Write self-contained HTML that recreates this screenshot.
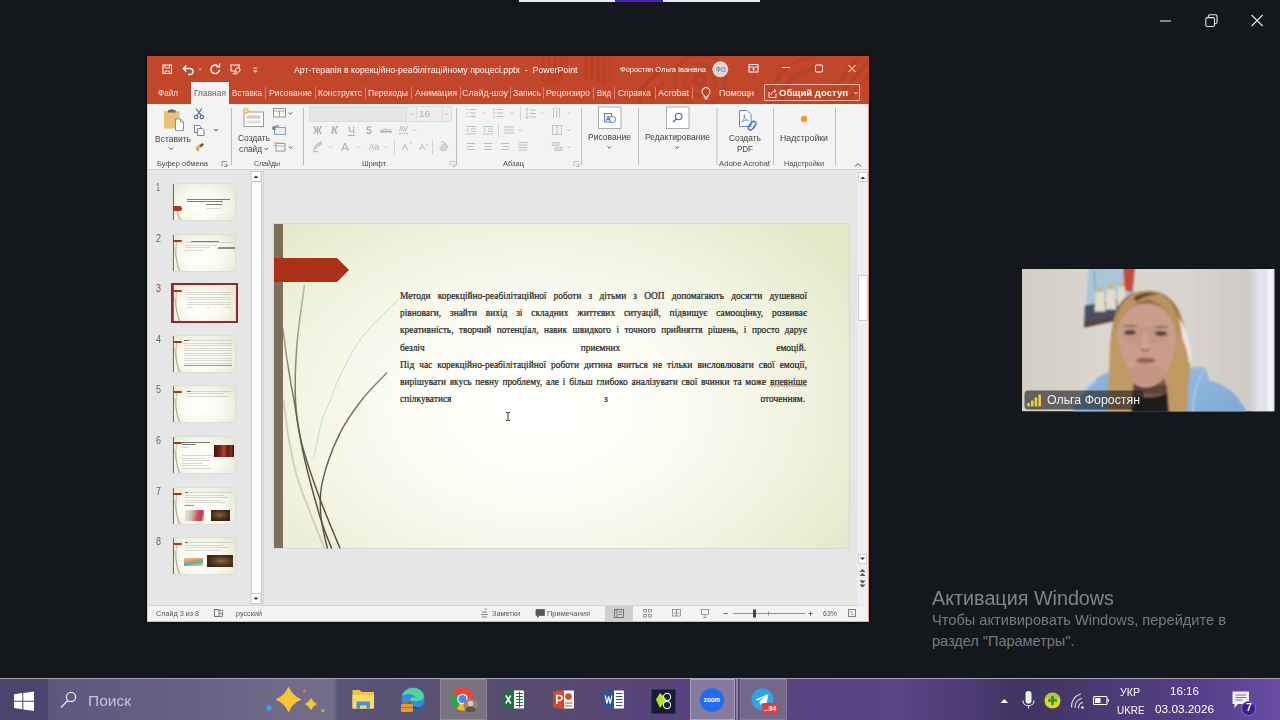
<!DOCTYPE html>
<html lang="ru">
<head>
<meta charset="utf-8">
<title>Zoom</title>
<style>
*{box-sizing:border-box;margin:0;padding:0}
html,body{width:1280px;height:720px;overflow:hidden;background:#14171b;font-family:"Liberation Sans",sans-serif;}
#root{position:relative;width:1280px;height:720px;overflow:hidden;background:#14171b}
#root>div,#root>svg,.a{position:absolute}
.t{position:absolute;white-space:nowrap;line-height:1.15;transform-origin:0 50%;display:block}
svg{overflow:visible}
</style>
</head>
<body>
<div id="root">
<!-- zoom window chrome -->
<div style="left:519px;top:0;width:241px;height:1.600px;background:#e8e8ee"></div>
<div style="left:615px;top:0;width:48px;height:1.600px;background:#4a22b0"></div>
<svg style="left:0;top:0" width="1280" height="50" viewBox="0 0 1280 50" fill="none" stroke="#e6e6e6" stroke-width="1.1">
  <path d="M1160 21h11"/>
  <rect x="1205.800" y="17.600" width="8.700" height="8.900" rx="1.600"/>
  <path d="M1208.300 17.600v-1.200a1.600 1.600 0 0 1 1.600-1.600h5.500a1.600 1.600 0 0 1 1.600 1.600v5.700a1.600 1.600 0 0 1-1.600 1.600h-.9"/>
  <path d="M1251.600 15l11 11M1262.600 15l-11 11"/>
</svg>

<!-- powerpoint window frame -->
<div style="left:145px;top:55px;width:726px;height:568.500px;background:#0d0e10;opacity:.6"></div>
<div style="left:147px;top:56px;width:722.300px;height:565.700px;background:#e6e6e6"></div>
<div style="left:147px;top:56px;width:722.300px;height:48px;background:#c1462a"></div>
<!-- title bar decorative pattern (right part) -->
<svg style="left:147px;top:56px" width="722" height="48" viewBox="147 56 722 48">
  <defs><clipPath id="tbc"><rect x="147" y="56" width="722" height="48"/></clipPath></defs>
  <g clip-path="url(#tbc)" fill="none" stroke="#b23e23" opacity=".55">
    <path stroke-width="3" d="M586 57v22M592 57v22M598 57v26M604 57v26M610 57v22"/>
    <circle cx="700" cy="80" r="5" stroke-width="5"/>
    <circle cx="700" cy="80" r="15" stroke-width="4"/>
    <circle cx="700" cy="80" r="26" stroke-width="4"/>
    <path stroke-width="4" d="M640 104v-14l20-20M652 104v-10l12-12"/>
    <path stroke-width="4" d="M770 104c0-26 20-47 46-47M782 104c0-20 14-35 34-35"/>
    <path stroke-width="4" d="M820 104l40-47M832 104l40-47M844 104l40-47"/>
    <path stroke-width="3" d="M543 56v26M549 56v28M555 56v28M561 56v26M567 56v20"/>
  </g>
</svg>
<!-- active tab -->
<div style="left:191px;top:82px;width:38px;height:22px;background:#f3f3f3"></div>
<!-- ribbon -->
<div style="left:148px;top:104px;width:720px;height:65px;background:#f3f3f3"></div>
<div style="left:148px;top:169px;width:720px;height:1px;background:#d2d2d2"></div>
<!-- window border -->
<div style="left:147px;top:104px;width:1px;height:517.700px;background:#e4c6bf"></div>
<div style="left:868.300px;top:104px;width:1px;height:517.700px;background:#dd9c8c"></div>
<div style="left:147px;top:620.700px;width:722.300px;height:1px;background:#e3b9ae"></div>
<!-- share button outline -->
<div style="left:764px;top:84px;width:96px;height:17px;border:1px solid #e9b9ab;border-radius:1px"></div>
<!-- tab separators -->
<svg style="left:0;top:0" width="1280" height="720" viewBox="0 0 1280 720">
 <g stroke="#d77f69" stroke-width="1">
  <path d="M265.5 87v12M315.5 87v12M365.5 87v12M411.5 87v12M460.5 87v12M510.5 87v12M543.5 87v12M593.5 87v12M614.5 87v12M655.5 87v12M692.5 87v12"/>
 </g>
 <!-- ribbon group dividers -->
 <g stroke="#bdbdbd" stroke-width="1">
  <path d="M231.5 108v57M303.5 108v57M456.5 108v57M581.5 108v57M638.5 108v57M717 108v57M773.5 108v57M835.5 108v57"/>
 </g>
 <g stroke="#d2d2d2" stroke-width="1"><path d="M394.5 140v14M432.5 140v14M520.5 107v13M498.5 124v13"/></g>
</svg>
<!-- left pane scrollbar -->
<div style="left:250.500px;top:171px;width:11px;height:433px;background:#ffffff;border:1px solid #cbcbcb"></div>
<div style="left:263px;top:170px;width:1px;height:435px;background:#d4d4d4"></div>
<!-- right scrollbar -->
<div style="left:857px;top:170px;width:11.300px;height:435px;background:#efefef"></div>
<div style="left:858px;top:275px;width:9.500px;height:46px;background:#ffffff;border:1px solid #cfcfcf"></div>
<div style="left:858px;top:172px;width:9.500px;height:10px;background:#fff;border:1px solid #cfcfcf"></div>
<div style="left:858px;top:554px;width:9px;height:10px;background:#fff;border:1px solid #cfcfcf"></div>
<!-- status bar -->
<div style="left:148px;top:606px;width:720.300px;height:15px;background:#f3f3f3"></div>
<div style="left:148px;top:604.500px;width:709px;height:1.500px;background:#d6d6d6"></div>
<div style="left:605px;top:606px;width:28px;height:15px;background:#cfcfcf"></div>

<!-- ribbon + titlebar icons -->
<svg style="left:0;top:0" width="1280" height="720" viewBox="0 0 1280 720" fill="none">
 <!-- QAT (white) -->
 <g stroke="#fff" stroke-width="1.1" fill="none">
  <path d="M163 65h8.5v8.5h-8.5z"/><path d="M165 65v3h4.5v-3M165.3 73.5v-2.5h4v2.5" stroke-width=".9"/>
  <path d="M183.5 68.5h6.5a3 3 0 0 1 0 6h-2" stroke-width="1.3"/><path d="M186.3 65.5l-3 3 3 3" stroke-width="1.3"/>
  <path d="M198.5 68.5l1.5 1.5 1.5-1.5" stroke-width=".9" opacity=".8"/>
  <path d="M218.6 66.6a4.3 4.3 0 1 0 .9 3.2" stroke-width="1.4"/><path d="M219.6 63.4v3.6h-3.6" stroke-width="1.2"/>
  <path d="M230 65h10M231 65v6h8v-6M235 71v2.5M232.5 73.8h5" stroke-width="1"/><circle cx="237.8" cy="70" r="2.3" fill="#c1462a" stroke-width=".9"/>
  <path d="M253.5 68h3.5" stroke-width=".9"/><path d="M253.5 70.5l1.8 1.8 1.8-1.8" stroke-width=".9" fill="#fff"/>
  <!-- ribbon display options, min, max, close -->
  <rect x="749" y="64.5" width="9" height="7.5" stroke-width="1"/><path d="M749 67h9M753.5 71.2v-3M752 69.5l1.500-1.500 1.500 1.500" stroke-width=".9"/>
  <path d="M782 67.5h8" stroke-width="1"/>
  <rect x="815.5" y="65" width="7" height="7" rx="1" stroke-width="1"/>
  <path d="M848.5 65l7 7M855.5 65l-7 7" stroke-width="1"/>
  <!-- bulb -->
  <path d="M704.2 95.3c-1.6-1.2-2.2-2.4-2.2-3.8a4 4 0 0 1 8 0c0 1.400-.6 2.600-2.200 3.800v1.700h-3.600z" stroke-width="1"/><path d="M704.5 98.800h3" stroke-width="1"/>
  <!-- share icon + arrow -->
  <path d="M769 92v5.500h7v-4" stroke-width=".9"/><path d="M771 95c.3-2.500 2-4 4.500-4.200M774 89l2 1.800-2 1.800" stroke-width=".9"/>
  <path d="M854 92l1.800 1.800 1.800-1.800" stroke-width=".9"/>
 </g>
 <circle cx="720.3" cy="69.3" r="8" fill="#ded6da"/>

 <!-- Paste -->
 <rect x="164" y="111" width="15.500" height="17.500" rx="1" fill="#eac07a"/>
 <path d="M168 112.500v-2.500h2.300a1.600 1.600 0 0 1 3 0h2.300v2.500z" fill="#6a6a6a"/>
 <path d="M175.500 119h5l3 3v8.500h-8z" fill="#fff" stroke="#7a7a7a" stroke-width=".8"/>
 <path d="M180.500 119v3h3" stroke="#7a7a7a" stroke-width=".7"/>
 <path d="M169 147.500l2 2 2-2" stroke="#555" stroke-width="1"/>
 <!-- scissors -->
 <g stroke="#44618c" stroke-width="1.100"><path d="M196 108.500l5.200 7M202 108.500l-5.200 7"/><circle cx="196.200" cy="117" r="1.700"/><circle cx="201.800" cy="117" r="1.700"/></g>
 <!-- copy -->
 <g stroke="#777" stroke-width=".9" fill="#fafafa"><path d="M194.500 125.500h5l1.500 1.500v5.500h-6.500z"/><path d="M197.500 128.500h5l1.500 1.500v5.500h-6.500z"/></g>
 <path d="M214 129l2 2 2-2" stroke="#555" stroke-width="1"/>
 <!-- format painter -->
 <path d="M195.500 147l4.500-3 2 3-4.500 3z" fill="#e8b25c"/><path d="M199.500 145.500l3-2.500 1.300 1.800-3 2.500z" fill="#5a5040"/><path d="M196 148.500l3 2.500" stroke="#c9923a" stroke-width="1.500"/>
 <!-- dialog launchers -->
 <g stroke="#777" stroke-width=".8"><path d="M222 161.500h-0v5M222 161.500h5M224 166.500h3v-3M227 166.500l-2.500-2.500"/>
  <g opacity=".45"><path d="M450 161.500v5M450 161.500h5M452 166.500h3v-3M455 166.500l-2.500-2.500"/><path d="M574 161.500v5M574 161.500h5M576 166.500h3v-3M579 166.500l-2.500-2.500"/></g></g>

 <!-- New slide -->
 <rect x="244" y="112" width="19.500" height="14.500" fill="#fdfdfd" stroke="#9a9a9a" stroke-width="1"/>
 <rect x="247" y="115.500" width="13.500" height="3" fill="#c9c9c9"/><rect x="247" y="120.500" width="13.500" height="3" fill="#dedede"/>
 <g stroke="#efb04a" stroke-width="1.100"><path d="M246 107.500v7M242.500 111h7M243.600 108.600l4.800 4.800M248.400 108.600l-4.800 4.800"/></g><circle cx="246" cy="111" r="1.600" fill="#fbe2a8"/>
 <path d="M264.500 148l1.800 1.800 1.800-1.800" stroke="#555" stroke-width="1"/>
 <!-- layout / reset / section -->
 <rect x="273.500" y="108.500" width="12" height="8.500" fill="#fafafa" stroke="#8a8a8a" stroke-width=".9"/><path d="M273.500 111h12M279.500 111v6" stroke="#8a8a8a" stroke-width=".8"/>
 <path d="M288.700 112.500l1.800 1.800 1.800-1.800" stroke="#555" stroke-width="1"/>
 <rect x="274.500" y="127.500" width="11" height="7" fill="#e7eef7" stroke="#7d99bd" stroke-width=".9"/><path d="M273.500 129c.5-2.500 3-3.800 5.500-3M273 126.500v2.800h2.800" stroke="#3f74b5" stroke-width="1.100"/>
 <rect x="276" y="143.500" width="9" height="7.500" fill="#fafafa" stroke="#8a8a8a" stroke-width=".9"/><path d="M273.500 143h8M273.500 145.500h2" stroke="#e2a44a" stroke-width="1.100"/><path d="M276 146h9" stroke="#8a8a8a" stroke-width=".7"/>
 <path d="M288.700 146.500l1.800 1.800 1.800-1.800" stroke="#555" stroke-width="1"/>

 <!-- font boxes -->
 <rect x="309.500" y="106.500" width="97" height="15" fill="#e6e6e6" stroke="#dcdcdc"/>
 <rect x="406.500" y="106.500" width="10" height="15" fill="#ededed" stroke="#dcdcdc"/>
 <rect x="416.500" y="106.500" width="26" height="15" fill="#ededed" stroke="#dcdcdc"/>
 <rect x="442.500" y="106.500" width="9" height="15" fill="#ededed" stroke="#dcdcdc"/>
 <g stroke="#bdbdbd" stroke-width=".9">
  <path d="M410 113.500l1.500 1.500 1.500-1.500M445.500 113.500l1.500 1.500 1.500-1.500"/>
  <path d="M413 129.500l1.500 1.500 1.500-1.500M329 146.500l1.500 1.500 1.500-1.500M357 146.500l1.500 1.500 1.500-1.500M384 146.500l1.500 1.500 1.500-1.500"/>
  <path d="M399 133.500h9M399 133.500l1.300-1.200M399 133.500l1.300 1.200M408 133.500l-1.300-1.200M408 133.500l-1.300 1.200" stroke-width=".7"/>
  <!-- highlighter -->
  <path d="M313.500 150l2-4.500 5-4 1.500 1.800-5 4z" fill="#d0d0d0"/><path d="M313 151.500h5" stroke-width="1.400"/>
  <path d="M409.500 143.500l1.300-1.500 1.300 1.500M426 144.500l1.200 1.300 1.200-1.300" stroke-width=".8"/>
  <!-- eraser -->
  <path d="M441.500 150.500l-1.800-2.600 5-5 3.500 3.500-3 4.100z" fill="#d6d6d6"/><path d="M441 143l2-2 1.500 2" fill="none"/>
 </g>
 <!-- paragraph icons -->
 <g stroke="#bdbdbd" stroke-width="1">
  <path d="M469.500 109.500h6M469.500 113h6M469.500 116.500h6M466 109.500h1.500M466 113h1.500M466 116.500h1.500"/>
  <path d="M482.500 112.500l1.500 1.500 1.500-1.500M510.500 112.500l1.500 1.500 1.500-1.500M541 112.500l1.500 1.500 1.500-1.500M567.500 112.500l1.500 1.500 1.500-1.500M519 129.500l1.500 1.500 1.500-1.500M567.500 129.500l1.500 1.500 1.500-1.500M567.500 146.500l1.500 1.500 1.500-1.500" stroke-width=".9"/>
  <path d="M497 109.500h6M497 113h6M497 116.500h6M494 108.500v2.500M494 112v2.500M494 115.500v2.500"/>
  <path d="M530 110h6M530 113.500h6M530 117h6" /><path d="M527 108v10.500M525.500 109.500l1.500-1.500 1.500 1.500M525.500 117l1.500 1.500 1.500-1.500" stroke-width=".8"/>
  <path d="M553.500 108v10M556.500 110v8M559.500 108v10M555 109l1.500-1.500 1.500 1.500" stroke-width=".9"/>
  <path d="M466 126.500h10M471 129h5M471 131.500h5M466 134h10M469 128.500l-2.500 1.800 2.500 1.800" stroke-width=".9"/>
  <path d="M483 126.500h10M488 129h5M488 131.500h5M483 134h10M483.500 128.500l2.500 1.800-2.500 1.800" stroke-width=".9"/>
  <path d="M504 127h10M504 130h10M504 133h10"/>
  <rect x="552.500" y="125.500" width="9" height="9" stroke-width=".9" fill="none"/><path d="M557 126.500v7M555.500 128l1.500-1.500 1.500 1.500M555.500 132l1.500 1.500 1.500-1.500" stroke-width=".8"/>
  <path d="M467 143.500h8M467 146.500h6M467 149.500h8"/>
  <path d="M484 143.500h8M485 146.500h6M484 149.500h8"/>
  <path d="M501 143.500h8M503 146.500h6M501 149.500h8"/>
  <path d="M518.500 142.500h9M518.500 145h9M518.500 147.500h9M518.500 150h9"/>
  <path d="M552 142.500h7v3h-7zM555 147.500h7v3h-7z" fill="#e3e3e3" stroke-width=".8"/>
 </g>
 <!-- Drawing button -->
 <rect x="598.500" y="107" width="22.500" height="21.500" fill="#fff" stroke="#adadad"/>
 <rect x="604.500" y="113.500" width="7" height="8.500" fill="#fff" stroke="#4a76b0" stroke-width=".9"/><circle cx="612.500" cy="119.500" r="3.200" fill="#fff" stroke="#4a76b0" stroke-width=".9"/>
 <text x="605.600" y="121" font-family="Liberation Sans, sans-serif" font-size="7" fill="#4a76b0" font-weight="700">A</text>
 <path d="M607.500 146.500l1.800 1.800 1.800-1.800" stroke="#555" stroke-width="1"/>
 <!-- Editing button -->
 <rect x="666.500" y="107" width="22.500" height="21.500" fill="#fff" stroke="#adadad"/>
 <circle cx="678.700" cy="116.500" r="3.200" stroke="#3c6aa6" stroke-width="1.100"/><path d="M676.400 118.800l-3.400 3.400" stroke="#3c6aa6" stroke-width="1.300"/>
 <path d="M675.500 146.500l1.800 1.800 1.800-1.800" stroke="#555" stroke-width="1"/>
 <!-- Create PDF -->
 <path d="M739.500 110.500h7.500l4 4v12h-11.500z" fill="#fdfdfd" stroke="#5f86c4" stroke-width="1"/>
 <path d="M742 122c1.800-2.400 3-5.400 2.600-7.400-1.100.400-.6 3.200 1.200 5 1.200 1.100 2.800 1.400 2.900.7 0-.8-3.600-.7-6.700 1.700z" stroke="#5f86c4" stroke-width=".8"/>
 <g stroke="#4a78c0" stroke-width="1.400" stroke-linecap="round"><path d="M749.500 124.500l2.600-2.600a2.300 2.300 0 0 1 3.300 3.300l-1.600 1.600"/><path d="M753.200 125.200l-2.600 2.600a2.300 2.300 0 0 1-3.300-3.300l1.600-1.600" transform="translate(1.500 1.500)"/></g>
 <!-- Add-ins dot -->
 <circle cx="804" cy="119" r="3.200" fill="#f29a2e"/>
 <!-- collapse chevron -->
 <path d="M855 166.500l3-3 3 3" stroke="#555" stroke-width="1"/>
</svg>

<!-- thumbnails -->
<style>.th{position:absolute;left:173px;width:62px;height:36px;background:radial-gradient(ellipse 65% 80% at 46% 58%,#ffffff 0%,#fbfbf3 45%,#eff0e0 80%,#e5e8d2 100%);box-shadow:0 0 0 .5px #d5d5cc}.th i{position:absolute;display:block}.th .b{left:0;top:0;width:1.2px;height:36px;background:#7a6e5a}.th .r{left:0;top:5px;width:8.5px;height:2.600px;background:#b5351c;border-radius:0 1.5px 1.5px 0}.th .l{height:1px;background:#a5a59a;opacity:.4}.th .d{height:1px;background:#4a473f;opacity:.7}</style>
<div class="th" style="top:183.5px"><i class="b"></i><svg style="position:absolute;left:0;top:0" width="62" height="36" viewBox="0 0 62 36" fill="none"><path d="M3.500 26C4 30 5.500 33.500 7 36M5 27C5.500 31 7 34 8.500 36" stroke="#8a826c" stroke-width=".6" opacity=".7"/></svg><i class="r" style="top:22.5px;height:4.5px;width:9px;border-radius:0 2.5px 2.5px 0"></i><i class="d" style="left:14px;top:15.5px;width:43px"></i><i class="d" style="left:14px;top:17.5px;width:36px"></i><i class="d" style="left:33px;top:20.5px;width:16px"></i><i class="l" style="left:33px;top:24.5px;width:15px"></i></div>
<div class="th" style="top:234.5px"><i class="b"></i><svg style="position:absolute;left:0;top:0" width="63" height="36" viewBox="0 0 63 36" fill="none"><path d="M1.5 12C2.5 22 4.5 30 7 36M3.5 7C2.4 18 3 27 6 36" stroke="#8a826c" stroke-width=".6" opacity=".8"/></svg><i class="r"></i><i class="l" style="left:12px;top:7px;width:48px"></i><i class="d" style="left:18px;top:6.5px;width:28px;height:1.300px"></i><i class="l" style="left:12px;top:10px;width:32px"></i><i class="l" style="left:12px;top:12.5px;width:25px"></i><i class="d" style="left:45px;top:12.5px;width:17px;height:1.5px;opacity:.6"></i><i class="l" style="left:12px;top:15.5px;width:18px"></i></div>
<div class="th" style="top:284.5px"><i class="b"></i><svg style="position:absolute;left:0;top:0" width="63" height="36" viewBox="0 0 63 36" fill="none"><path d="M1.5 12C2.5 22 4.5 30 7 36M3.5 7C2.4 18 3 27 6 36" stroke="#8a826c" stroke-width=".6" opacity=".8"/></svg><i class="r"></i><i class="l" style="left:14px;top:7px;width:44px"></i><i class="l" style="left:14px;top:9.5px;width:44px"></i><i class="l" style="left:14px;top:12px;width:44px"></i><i class="l" style="left:14px;top:14.5px;width:44px"></i><i class="l" style="left:14px;top:17px;width:44px"></i><i class="l" style="left:14px;top:19.5px;width:44px"></i><i class="l" style="left:14px;top:22px;width:6px"></i><i class="l" style="left:34px;top:22px;width:3px"></i><i class="l" style="left:52px;top:22px;width:6px"></i></div>
<div class="th" style="top:335.5px"><i class="b"></i><svg style="position:absolute;left:0;top:0" width="63" height="36" viewBox="0 0 63 36" fill="none"><path d="M1.5 12C2.5 22 4.5 30 7 36M3.5 7C2.4 18 3 27 6 36" stroke="#8a826c" stroke-width=".6" opacity=".8"/></svg><i class="r"></i><i class="l" style="left:11px;top:4.5px;width:48px"></i><i class="l" style="left:11px;top:7px;width:48px"></i><i class="l" style="left:11px;top:9.5px;width:48px"></i><i class="l" style="left:11px;top:12px;width:48px"></i><i class="l" style="left:11px;top:14.5px;width:48px"></i><i class="l" style="left:11px;top:17px;width:48px"></i><i class="l" style="left:11px;top:19.5px;width:48px"></i><i class="l" style="left:11px;top:22px;width:48px"></i><i class="l" style="left:11px;top:24.5px;width:48px"></i><i class="l" style="left:11px;top:27px;width:48px"></i><i class="l" style="left:11px;top:29.5px;width:48px"></i><i class="d" style="left:11px;top:4.5px;width:5px"></i><i class="d" style="left:11px;top:29.5px;width:48px;opacity:.45"></i></div>
<div class="th" style="top:385.5px"><i class="b"></i><svg style="position:absolute;left:0;top:0" width="63" height="36" viewBox="0 0 63 36" fill="none"><path d="M1.5 12C2.5 22 4.5 30 7 36M3.5 7C2.4 18 3 27 6 36" stroke="#8a826c" stroke-width=".6" opacity=".8"/></svg><i class="r"></i><i class="l" style="left:14px;top:5px;width:44px"></i><i class="l" style="left:14px;top:7.5px;width:37px"></i><i class="l" style="left:14px;top:10px;width:41px"></i><i class="d" style="left:14px;top:5px;width:4px"></i></div>
<div class="th" style="top:436.5px"><i class="b"></i><svg style="position:absolute;left:0;top:0" width="63" height="36" viewBox="0 0 63 36" fill="none"><path d="M1.5 12C2.5 22 4.5 30 7 36M3.5 7C2.4 18 3 27 6 36" stroke="#8a826c" stroke-width=".6" opacity=".8"/></svg><i class="r"></i><i class="d" style="left:9px;top:5px;width:28px"></i><i class="d" style="left:9px;top:7.5px;width:14px"></i><i class="l" style="left:9px;top:10.5px;width:7px"></i><i class="l" style="left:9px;top:18.5px;width:31px"></i><i class="l" style="left:9px;top:21px;width:24px"></i><i class="l" style="left:9px;top:23.5px;width:28px"></i><i class="l" style="left:9px;top:26px;width:21px"></i><i class="l" style="left:9px;top:28.5px;width:25px"></i><i class="l" style="left:9px;top:31px;width:29px"></i><i style="left:41px;top:8px;width:19.5px;height:12.5px;background:linear-gradient(90deg,#3c1410 0%,#7a2418 30%,#b0452a 50%,#5a1a14 70%,#8a3020 85%,#35100e 100%)"></i></div>
<div class="th" style="top:487.5px"><i class="b"></i><svg style="position:absolute;left:0;top:0" width="63" height="36" viewBox="0 0 63 36" fill="none"><path d="M1.5 12C2.5 22 4.5 30 7 36M3.5 7C2.4 18 3 27 6 36" stroke="#8a826c" stroke-width=".6" opacity=".8"/></svg><i class="r"></i><i class="l" style="left:12px;top:4.5px;width:46px"></i><i class="l" style="left:12px;top:7px;width:39px"></i><i class="l" style="left:12px;top:9.5px;width:43px"></i><i class="l" style="left:12px;top:12px;width:36px"></i><i class="l" style="left:12px;top:14.5px;width:40px"></i><i class="d" style="left:12px;top:4.5px;width:3px"></i><i class="d" style="left:12px;top:17.5px;width:9px;opacity:.6"></i><i style="left:11.5px;top:22.5px;width:19px;height:11px;background:linear-gradient(100deg,#e9e4de 0%,#d8cfc6 25%,#c9a48c 45%,#d04860 65%,#c83850 85%,#e8e0d8 100%)"></i><i style="left:37.5px;top:22px;width:19.5px;height:11px;background:radial-gradient(ellipse at 45% 45%,#8a6038 0%,#4a2c18 55%,#24140c 100%)"></i></div>
<div class="th" style="top:537.5px"><i class="b"></i><svg style="position:absolute;left:0;top:0" width="63" height="36" viewBox="0 0 63 36" fill="none"><path d="M1.5 12C2.5 22 4.5 30 7 36M3.5 7C2.4 18 3 27 6 36" stroke="#8a826c" stroke-width=".6" opacity=".8"/></svg><i class="r"></i><i class="l" style="left:12px;top:4.5px;width:46px"></i><i class="l" style="left:12px;top:7px;width:39px"></i><i class="l" style="left:12px;top:9.5px;width:43px"></i><i class="l" style="left:12px;top:12.5px;width:36px"></i><i class="d" style="left:12px;top:4.5px;width:3px"></i><i style="left:11px;top:20px;width:18.5px;height:8.5px;background:linear-gradient(170deg,#e8c9a0 0%,#e39a60 35%,#58b0a8 60%,#e0d4b0 100%)"></i><i style="left:34px;top:17px;width:26px;height:12px;background:radial-gradient(ellipse at 55% 50%,#8a6a3c 0%,#50341c 50%,#2a1a10 100%)"></i></div>
<div style="left:171px;top:283px;width:67px;height:39.500px;border:2px solid #8e2b2b"></div>

<!-- slide -->
<div style="left:273px;top:223px;width:577px;height:326px;background:#d9d9d9"></div>
<div style="left:274px;top:224px;width:575px;height:324px;background:radial-gradient(ellipse 66% 80% at 46% 57%,#ffffff 0%,#fdfdf6 32%,#f3f5e3 64%,#e3e8c8 100%)"></div>
<div style="left:274px;top:224px;width:9px;height:324px;background:#7b7159"></div>
<svg style="left:0;top:0" width="1280" height="720" viewBox="0 0 1280 720" fill="none">
  <defs><linearGradient id="cg" gradientUnits="userSpaceOnUse" x1="0" y1="285" x2="0" y2="500"><stop offset="0" stop-color="#8d866f" stop-opacity=".55"/><stop offset=".55" stop-color="#6a6149" stop-opacity=".9"/><stop offset="1" stop-color="#5a5139"/></linearGradient></defs>
  <path d="M274 258h63l12 12-12 12h-63z" fill="#ab3017"/>
  <g stroke="url(#cg)" stroke-linecap="round">
   <path stroke-width="1.5" d="M304.4 285.4C303.2 295.2 298.5 324.9 297.0 344.0C295.5 363.1 294.8 383.7 295.5 400.0C296.2 416.3 297.6 426.1 301.3 441.7C305.1 457.3 311.6 476.1 318.0 493.8C324.4 511.5 336.2 539.0 339.8 548.0"/>
   <path stroke-width="1.5" d="M283 329.0C284 338.0 288.7 371.2 290.8 383.0C292.9 394.8 292.0 388.5 294.0 400.0C296.0 411.5 298.7 432.6 303.0 452.0C307.3 471.4 315.2 500.7 320.0 516.7C324.8 532.7 329.6 542.8 331.5 548.0"/>
   <path stroke-width="1.4" d="M386.7 373.0C382.5 377.5 369.7 389.6 361.7 400.0C353.7 410.4 345.4 421.5 338.8 435.4C332.2 449.3 325.0 469.8 322.0 483.3C319.0 496.9 320.1 505.9 321.0 516.7C321.9 527.5 326.2 542.8 327.3 548.0"/>
  </g>
  <g stroke="#b9b6a6" stroke-linecap="round" opacity=".55">
   <path stroke-width="1" d="M399.0 299.0C392.8 305.4 371.7 324.2 361.7 337.5C351.7 350.8 344.0 368.6 338.8 379.0C333.6 389.4 333.2 393.0 330.4 400.0C327.6 407.0 324.8 411.1 322.0 420.8C319.2 430.5 315.2 451.8 313.8 458.0"/>
   <path stroke-width="2" d="M283.5 400.0C284.4 406.7 286.4 426.2 289.0 440.0C291.6 453.8 293.2 465.2 299.0 483.0C304.8 500.8 319.8 536.3 324.0 547.0"/>
  </g>
  <!-- spell-check squiggle -->
  <path d="M769 386.5l1.5-1.3 1.5 1.3 1.5-1.3 1.5 1.3 1.5-1.3 1.5 1.3 1.5-1.3 1.5 1.3 1.5-1.3 1.5 1.3 1.5-1.3 1.5 1.3 1.5-1.3 1.5 1.3 1.5-1.3 1.5 1.3 1.5-1.3 1.5 1.3 1.5-1.3 1.5 1.3 1.5-1.3 1.5 1.3 1.5-1.3 1.5 1.3 1.5-1.3" stroke="#d04a3a" stroke-width=".8"/>
  <!-- I-beam cursor -->
  <path d="M506 412.5h1.5m1 0h1.5M508 412.5v8M506 420.5h1.5m1 0h1.5" stroke="#333" stroke-width="1"/>
</svg>
<div id="stext" style="left:400px;top:288px;width:407px;font-family:'Liberation Serif',serif;font-size:9.4px;line-height:17.2px;color:#222;-webkit-text-stroke:.2px #222;text-align:justify;text-align-last:justify;white-space:nowrap;">
<div>Методи корекційно-реабілітаційної роботи з дітьми з ООП допомагають досягти душевної</div>
<div>рівноваги, знайти вихід зі складних життєвих ситуацій, підвищує самооцінку, розвиває</div>
<div>креативність, творчий потенціал, навик швидкого і точного прийняття рішень, і просто дарує</div>
<div style="width:406px">безліч приємних емоцій.</div>
<div>Під час корекційно-реабілітаційної роботи дитина вчиться не тільки висловлювати свої емоції,</div>
<div>вирішувати якусь певну проблему, але і більш глибоко аналізувати свої вчинки та може впевніше</div>
<div style="width:405px">спілкуватися з оточенням.</div>
</div>

<!-- status bar + scrollbar glyphs -->
<svg style="left:0;top:0" width="1280" height="720" viewBox="0 0 1280 720" fill="none">
 <!-- left pane scroll buttons -->
 <rect x="251" y="171.500" width="10" height="10" fill="#fff" stroke="#cbcbcb"/>
 <rect x="251" y="593.500" width="10" height="10" fill="#fff" stroke="#cbcbcb"/>
 <path d="M253.500 178l2.500-2.500 2.500 2.500z" fill="#333"/>
 <path d="M253.500 597.500l2.500 2.500 2.500-2.500z" fill="#333"/>
 <!-- right scroll arrows -->
 <path d="M860.300 179l2.500-2.500 2.500 2.500z" fill="#333"/>
 <path d="M860 557.500l2.500 2.500 2.500-2.500z" fill="#333"/>
 <g fill="#555"><path d="M859.500 572l3-3 3 3zM859.500 576l3-3 3 3z"/><path d="M859.500 580.500l3 3 3-3zM859.500 584.500l3 3 3-3z"/></g>
 <!-- status icons -->
 <g stroke="#666" stroke-width=".9">
  <rect x="214.500" y="609.500" width="4.500" height="7"/><path d="M219 610.500h3.500v6h-3.500M220 612.500l1.800 2M221.800 612.500l-1.800 2" stroke-width=".7"/>
  <path d="M482 612h5M481 614.500h7M482 617h5M484.500 609.500l1.200-1 1.200 1" stroke-width=".8"/>
  <path d="M536 609.500h8.500v6h-5l-2 2v-2h-1.500z" fill="#555"/>
  <rect x="614.500" y="609.500" width="9" height="8"/><path d="M617 609.500v8M618.500 612h3.500M618.500 614.500h3.500" stroke-width=".8"/>
  <g stroke="#888" stroke-width=".8"><rect x="643.500" y="609.500" width="3" height="2.500"/><rect x="648.500" y="609.500" width="3" height="2.500"/><rect x="643.500" y="614.500" width="3" height="2.500"/><rect x="648.500" y="614.500" width="3" height="2.500"/>
  <rect x="672.500" y="609.500" width="4" height="6.500"/><rect x="676.500" y="609.500" width="4" height="6.500"/><path d="M673.500 613h6"/>
  <path d="M700.500 609.500h9M701.500 609.500v5h7v-5M705 614.500v2.500M703 617.500h4"/></g>
  <path d="M723.500 613.500h4M808.500 613.500h4M810.500 611.500v4" stroke="#555" stroke-width=".9"/>
  <path d="M733 613.500h72" stroke="#777" stroke-width=".8"/><path d="M768.500 611.500v4" stroke="#777" stroke-width=".8"/>
  <rect x="753" y="609.500" width="3" height="8" fill="#444" stroke="none"/>
  <rect x="848.500" y="609.500" width="7" height="7" stroke="#666" stroke-width=".8"/><path d="M850.500 611.500h1.200v1.200M853.500 614.500h-1.200v-1.200" stroke-width=".7"/>
 </g>
</svg>

<!-- participant video tile -->
<svg style="left:1022px;top:268.5px" width="252.500" height="142.500" viewBox="1022 268.500 252.500 142.500">
 <defs>
  <clipPath id="vc"><rect x="1022" y="268.500" width="252.500" height="142.500"/></clipPath>
  <filter id="vb" x="-5%" y="-5%" width="110%" height="110%"><feGaussianBlur stdDeviation="1.300"/></filter>
  <filter id="vb2" x="-20%" y="-20%" width="140%" height="140%"><feGaussianBlur stdDeviation="3"/></filter>
  <linearGradient id="wall" x1="0" y1="0" x2="1" y2="0"><stop offset="0" stop-color="#d3cdc3"/><stop offset=".3" stop-color="#dbd6ce"/><stop offset=".62" stop-color="#d9d5cf"/><stop offset=".9" stop-color="#cfccc8"/><stop offset="1" stop-color="#dfe0e6"/></linearGradient>
  <linearGradient id="hair" x1="0" y1="0" x2="0" y2="1"><stop offset="0" stop-color="#7b5d3e"/><stop offset=".25" stop-color="#b48d58"/><stop offset=".6" stop-color="#c4a06a"/><stop offset="1" stop-color="#b08c5c"/></linearGradient>
  <linearGradient id="jk" x1="0" y1="0" x2="1" y2="1"><stop offset="0" stop-color="#93bbe2"/><stop offset="1" stop-color="#7ea7d3"/></linearGradient>
 </defs>
 <g clip-path="url(#vc)">
  <rect x="1022" y="268.500" width="252.500" height="142.500" fill="url(#wall)"/>
  <g filter="url(#vb)">
   <!-- wall panel seams -->
   <g stroke="#c9c5bf" stroke-width="1" opacity=".7"><path d="M1198 268v110M1222 268v125M1246 268v143"/></g>
   <!-- bright door strip at right -->
   <rect x="1251" y="268" width="24" height="143" fill="#d6d7dc"/>
   <rect x="1256" y="268" width="10" height="143" fill="#e4e5ea"/>
   <rect x="1267" y="268" width="6.500" height="143" fill="#f4f5fa"/>
   <!-- picture on wall -->
   <path d="M1089 266h46l-4 52-47 9z" fill="#a9c6d8"/>
   <path d="M1123 266h12l-2.500 26-8-2z" fill="#c8483d"/>
   <path d="M1085 305l46-8-1.500 20-45.500 10z" fill="#48506a"/>
   <path d="M1084.500 321l30-6 .5 5.500-30.500 6.500z" fill="#5d4238"/>
   <path d="M1096 293c2-6 7-6 8 0l1.500 18h-11zM1107 290c2-6 7-6 8 0l1.500 19h-11zM1118 288c2-5 6-5 7 0l1 17h-9z" fill="#e4dccb"/>
   <circle cx="1100" cy="289" r="3" fill="#cdb48a"/><circle cx="1111" cy="286" r="3" fill="#cdb48a"/><circle cx="1121.500" cy="284" r="2.700" fill="#cdb48a"/>
   <path d="M1094 270l1.500 20" stroke="#7f98b0" stroke-width="1.200"/>
   <!-- jacket -->
   <path d="M1072 413c3-10 8-20 14-26 6-7 14-12 22-15l14-2 8 43z" fill="url(#jk)"/><path d="M1078 400c4-8 10-16 18-21" stroke="#c4d8ee" stroke-width="3" fill="none" opacity=".8"/>
   <path d="M1176 413l6-42c6-5 20-5 24-3l3 12c16 3 30 14 38 33z" fill="url(#jk)"/>
   <path d="M1184 372l-2 40" stroke="#6f98c6" stroke-width="1.500"/>
   <path d="M1205 369c-8 10-12 26-12 43" stroke="#a9cbea" stroke-width="2" fill="none"/>
   <!-- shirt + neck -->
   <path d="M1128 390h44v24h-44z" fill="#1a1a1c"/>
   <path d="M1130 372h34l4 20c-8 6-30 6-38 0z" fill="#8a6254"/><path d="M1130 384h38v10h-38z" fill="#4a332c" opacity=".7"/>
   <!-- hair back -->
   <path d="M1147 290.500c-12 0-22 4-28 14-5 9-8 24-9 42-1 22-2 44-3 68h24l3-38h32l4 38h17c0-10 1-20 1-30 3-10 3-22 1-34-2-22-8-40-16-49-7-8-16-11.500-26-11.500z" fill="url(#hair)"/>
   <!-- highlight at right of hair -->
   <path d="M1179 318c8 10 13 26 12 44l-7-2c0-14-2-28-5-42z" fill="#ebe5de"/>
   <!-- face -->
   <path d="M1146 303c-17 0-29 13-29 36 0 27 13 48 29 48s30-21 30-48c0-23-13-36-30-36z" fill="#c99e8c"/>
   <ellipse cx="1146" cy="374" rx="20" ry="10" fill="#c2917f" opacity=".6"/>
   <!-- fringe -->
   <path d="M1147 290.500c-18 0-30 12-32 42 5-14 12-24 24-31 4-2 8-3 12-2 10 4 20 12 27 30-1-26-12-39.500-31-39.500z" fill="#ba945e"/>
   <path d="M1133 298c4-5 14-8 27-4-9 0-17 2-23 7z" fill="#5f4832"/>
   <!-- front locks -->
   <path d="M1116 326c-4 12-6 30-7 50l-2 38h24c0-16 0-30-2-42-6-12-11-28-13-46z" fill="#c09a64"/>
   <path d="M1177 330c-1 18-5 32-11 44 1 12 2 26 3 40h18c0-12 1-24 1-34 3-16 0-36-11-50z" fill="#bf9862"/>
   <!-- facial features -->
   <ellipse cx="1145" cy="335" rx="24" ry="9" fill="#b38676" opacity=".35"/>
   <g fill="#4f3530" opacity=".9"><ellipse cx="1130" cy="332" rx="6" ry="2.600"/><ellipse cx="1161" cy="333" rx="6" ry="2.600"/></g>
   <g fill="#7d5648" opacity=".6"><ellipse cx="1130" cy="325.500" rx="7.500" ry="1.500"/><ellipse cx="1161" cy="326.500" rx="7.500" ry="1.500"/></g>
   <path d="M1140.500 348.500c2.500 2.400 6.500 2.400 9 0" stroke="#9c6a5a" stroke-width="2" fill="none"/>
   <ellipse cx="1145.500" cy="360" rx="10" ry="3" fill="#96565a" opacity=".9"/>
   <ellipse cx="1145" cy="340" rx="3.500" ry="8" fill="#d6ac9a" opacity=".6"/>
  </g>
  <!-- name label -->
  <rect x="1024.500" y="390" width="119" height="19" rx="4" fill="#1b1b1d" fill-opacity=".62"/>
  <g fill="#f4cf3e"><rect x="1027.300" y="402.500" width="2.500" height="3.500" rx=".6"/><rect x="1031" y="400" width="2.500" height="6" rx=".6"/><rect x="1034.700" y="397" width="2.500" height="9" rx=".6"/><rect x="1038.400" y="394" width="2.500" height="12" rx=".6"/></g>
 </g>
</svg>

<!-- taskbar -->
<div style="left:0;top:678px;width:1280px;height:42px;background:linear-gradient(90deg,#5d5580 0px,#5f5680 48px,#696182 200px,#756e8b 333px,#5b5474 338px,#585170 430px,#554e6c 500px,#57496f 570px,#56437a 650px,#5a4382 800px,#5b4386 900px,#4e3d76 960px,#3f3560 1020px,#493a72 1100px,#553f88 1200px,#6a4ca4 1280px)"></div>
<div style="left:0;top:678px;width:48px;height:42px;background:#4d446e"></div>
<div style="left:0;top:678px;width:1280px;height:1px;background:#a6a1b4"></div>
<div style="left:440px;top:679px;width:47px;height:41px;background:#78737f;box-shadow:inset 0 0 0 1px #8b8794"></div>
<div style="left:690px;top:679px;width:45px;height:41px;background:#857b9c;box-shadow:inset 0 0 0 1px #a9a1bb"></div>
<div style="left:736px;top:679px;width:2px;height:41px;background:#8a80a0"></div>
<div style="left:740px;top:679px;width:47px;height:41px;background:#73678c;box-shadow:inset 0 0 0 1px #857a9c"></div>
<svg style="left:0;top:679px" width="1280" height="42" viewBox="0 678 1280 42" fill="none">
 <!-- start -->
 <g fill="#fff"><path d="M14 693.200l8.300-1.150v7.600H14zM23.300 691.900l10.700-1.500v9.250H23.300zM14 700.650h8.300v7.600L14 707.100zM23.300 700.650H34v9.250l-10.700-1.500z"/></g>
 <!-- search -->
 <circle cx="71" cy="696" r="4.600" stroke="#e4e0ee" stroke-width="1.300"/><path d="M67.600 699.600l-6.600 7" stroke="#e4e0ee" stroke-width="1.400"/>
 <!-- sparkles -->
 <path d="M288.5 686.7Q292.1 694.9 300.3 698.5Q292.1 702.1 288.5 710.3Q284.9 702.1 276.7 698.5Q284.9 694.9 288.5 686.7z" fill="#f8c630" stroke="#f8c630" stroke-width="1.2" stroke-linejoin="round"/>
 <path d="M311 697.4Q312.7 701.3 316.6 703Q312.7 704.7 311 708.6Q309.3 704.7 305.4 703Q309.3 701.3 311 697.4z" fill="#f8c630" stroke="#f8c630" stroke-width=".8" stroke-linejoin="round"/>
 <path d="M269 703.500l3.500 3.500-3.500 3.500-3.500-3.500z" fill="#3aa0ea"/>
 <circle cx="304.500" cy="690" r="1.800" fill="#e8703a"/><circle cx="323" cy="709.500" r="1.600" fill="#8fc83a"/>
 <!-- explorer -->
 <path d="M352.500 689h7l2 2h12.500v16.500h-21.500z" fill="#f4c542"/><path d="M352.500 694h21.500v13.500h-21.500z" fill="#fbd96a"/><path d="M356.500 700.500h13.500v7h-13.500z" fill="#3f95d6"/><path d="M360 704.500h6.500v3h-6.500z" fill="#fbd96a"/>
 <!-- edge -->
 <circle cx="413" cy="698" r="11.500" fill="#2f8fd8"/><path d="M402 695c2-9 16-11 21-3 2 4 0 8-5 8h-8c0-4 4-5 6-3-2-5-11-5-14-2z" fill="#56d1a0"/><path d="M404 704c4 7 14 7 19 1-5 2-11 1-13-4z" fill="#1d5fb0"/>
 <rect x="401" y="703" width="12" height="8" rx="1" fill="#e59a2a"/><path d="M405 703v-1.500h4v1.500" stroke="#b06c10" stroke-width="1"/><path d="M401 706.500h12" stroke="#b06c10" stroke-width=".8"/>
 <!-- chrome -->
 <circle cx="462.500" cy="698" r="11.500" fill="#e8453c"/><path d="M462.500 698l-10-5.700a11.500 11.500 0 0 0 4.300 15.700z" fill="#2ea352"/><path d="M462.500 698l-5.700 10a11.500 11.500 0 0 0 15.700-4.200l.5-1.200z" fill="#f9bc15"/><path d="M452.500 692.300a11.500 11.500 0 0 1 20 0z" fill="#e8453c"/>
 <circle cx="462.500" cy="698" r="5.300" fill="#fff"/><circle cx="462.500" cy="698" r="4.100" fill="#4a8af4"/>
 <circle cx="470.500" cy="704.500" r="7" fill="#8f877c"/><circle cx="470.500" cy="702.500" r="2.800" fill="#d9c9b2"/><path d="M465 709c1-4.500 10-4.500 11 0-2 3-9 3-11 0z" fill="#5c5248"/>
 <!-- excel -->
 <rect x="512" y="689.500" width="12" height="18" rx="1" fill="#fff"/><g stroke="#1e7145" stroke-width="1"><path d="M516 692.500h7M516 695.500h7M516 698.500h7M516 701.500h7M516 704.500h7M519.500 690.500v16"/></g>
 <path d="M503 690.500l11-2v20l-11-2z" fill="#1e7145"/><path d="M505.800 694.500l5 8M510.800 694.500l-5 8" stroke="#fff" stroke-width="1.500"/>
 <!-- powerpoint -->
 <rect x="562" y="689.500" width="12" height="18" rx="1" fill="#fff"/><circle cx="568.500" cy="695.500" r="3.300" fill="#d24726"/><path d="M565 702h7.500M565 705h7.500" stroke="#d24726" stroke-width="1.200"/>
 <path d="M553 690.500l11-2v20l-11-2z" fill="#d24726"/><path d="M556.800 703v-8.500h2.700a2.500 2.500 0 0 1 0 5h-2.700" stroke="#fff" stroke-width="1.500"/>
 <!-- word -->
 <rect x="612" y="689.500" width="12" height="18" rx="1" fill="#fff"/><g stroke="#2b579a" stroke-width="1"><path d="M616 692.500h6.500M616 695.500h6.500M616 698.500h6.500M616 701.500h6.500M616 704.500h6.500"/></g>
 <path d="M603 690.500l11-2v20l-11-2z" fill="#2b579a"/><path d="M605.300 694.500l1.600 8 1.700-7 1.700 7 1.600-8" stroke="#fff" stroke-width="1.200"/>
 <!-- dark app -->
 <rect x="651.500" y="688.500" width="24" height="24" fill="#171c36"/>
 <path d="M660 692l6.500 6.500-6.500 8.500-4-8.500z" fill="#b5e61d"/><circle cx="667" cy="696" r="3.600" stroke="#e8f0d8" stroke-width="1.100"/><circle cx="667" cy="704" r="3.600" stroke="#e8f0d8" stroke-width="1.100"/>
 <!-- zoom -->
 <circle cx="712" cy="699" r="12" fill="#1f6bf2"/>
 <text x="712" y="701" text-anchor="middle" font-family="Liberation Sans, sans-serif" font-weight="700" font-size="6.300" fill="#fff">zoom</text>
 <!-- telegram -->
 <circle cx="762.500" cy="698.500" r="11" fill="#2fa4df"/><path d="M755.500 698.500l13-5.500-2.500 12-4-3-2 2-.5-3.500 6-5.500-7.500 4.500z" fill="#fff"/>
 <rect x="762.500" y="702" width="15" height="10.500" rx="1.500" fill="#e8392f"/>
 <text x="770.300" y="710.300" text-anchor="middle" font-family="Liberation Sans, sans-serif" font-weight="700" font-size="7.500" fill="#fff">..34</text>
 <!-- tray -->
 <path d="M1000.500 702l3.800-4 3.800 4z" fill="#fff"/>
 <rect x="1025.500" y="690" width="6" height="12.500" rx="2.800" fill="#f0eef5"/><path d="M1023 699.500c0 7 11 7 11 0M1028.500 704.500v3" stroke="#f0eef5" stroke-width="1.100"/>
 <circle cx="1052.500" cy="699.500" r="8" fill="#e8d22c"/><path d="M1045.500 696c4-5 11-5 14.500 0-4 3-10 3-14.500 0z" fill="#9bc53a" opacity=".8"/><path d="M1052.500 695v9M1048 699.500h9" stroke="#1f9a3a" stroke-width="2.600"/>
 <g stroke="#d9d6e2" stroke-width="1.200" stroke-linecap="round"><path d="M1071.500 706a13 13 0 0 1 9-13" /><path d="M1075 706.500a9 9 0 0 1 6.500-9"/><path d="M1078.500 707a5.500 5.500 0 0 1 4-5.500"/></g><circle cx="1082.500" cy="706.500" r="1.200" fill="#fff"/>
 <rect x="1093.500" y="695.500" width="13.500" height="8" rx="1" stroke="#fff" stroke-width="1.100"/><rect x="1095" y="697" width="5.500" height="5" fill="#fff"/><path d="M1108.300 698v3" stroke="#fff" stroke-width="1.200"/>
 <!-- notifications -->
 <path d="M1232.500 690.500h16.500v12.500h-11l-3.500 4v-4h-2z" fill="#f2f0f7"/><path d="M1235.500 694h10.500M1235.500 696.500h10.500M1235.500 699h7" stroke="#5a4a80" stroke-width=".8"/>
 <circle cx="1248.500" cy="707.500" r="7" fill="#3a1c8c" stroke="#8f7fd0" stroke-width=".8"/>
</svg>

<!-- text -->
<span class="t" id="t0" style="left:294px;top:66.11px;font-size:8.5px;color:#ffffff;transform:scaleX(1.0333);">Арт-терапія в корекційно-реабілітаційному процесі.pptx&nbsp; -&nbsp; PowerPoint</span>
<span class="t" id="t1" style="left:620px;top:65.99px;font-size:7.5px;color:#ffffff;transform:scaleX(0.9906);">Форостян Ольга Іванівна</span>
<span class="t" id="t2" style="left:716px;top:66.06px;font-size:6.5px;color:#5d6b8c;transform:scaleX(0.9500);">ФО</span>
<span class="t" id="t3" style="left:158px;top:88.33px;font-size:9px;color:#fbe6df;transform:scaleX(0.9033);">Файл</span>
<span class="t" id="t4" style="left:194px;top:88.33px;font-size:9px;color:#7d5e56;transform:scaleX(0.9339);">Главная</span>
<span class="t" id="t5" style="left:232px;top:88.33px;font-size:9px;color:#fbe6df;transform:scaleX(0.8968);">Вставка</span>
<span class="t" id="t6" style="left:269px;top:88.33px;font-size:9px;color:#fbe6df;transform:scaleX(0.9486);">Рисование</span>
<span class="t" id="t7" style="left:318px;top:88.33px;font-size:9px;color:#fbe6df;transform:scaleX(0.9604);">Конструктс</span>
<span class="t" id="t8" style="left:368px;top:88.33px;font-size:9px;color:#fbe6df;transform:scaleX(0.9474);">Переходы</span>
<span class="t" id="t9" style="left:415px;top:88.33px;font-size:9px;color:#fbe6df;transform:scaleX(0.9941);">Анимация</span>
<span class="t" id="t10" style="left:462px;top:88.33px;font-size:9px;color:#fbe6df;transform:scaleX(0.9856);">Слайд-шоу</span>
<span class="t" id="t11" style="left:513px;top:88.33px;font-size:9px;color:#fbe6df;transform:scaleX(0.9481);">Запись</span>
<span class="t" id="t12" style="left:546px;top:88.33px;font-size:9px;color:#fbe6df;transform:scaleX(0.9819);">Рецензиро</span>
<span class="t" id="t13" style="left:597px;top:88.33px;font-size:9px;color:#fbe6df;transform:scaleX(0.8591);">Вид</span>
<span class="t" id="t14" style="left:618px;top:88.33px;font-size:9px;color:#fbe6df;transform:scaleX(0.9345);">Справка</span>
<span class="t" id="t15" style="left:658px;top:88.33px;font-size:9px;color:#fbe6df;">Acrobat</span>
<span class="t" id="t16" style="left:719px;top:88.33px;font-size:9px;color:#fbe6df;">Помощн</span>
<span class="t" id="t17" style="left:779px;top:88.04px;font-size:9.5px;color:#ffffff;font-weight:700;transform:scaleX(1.0073);">Общий доступ</span>
<span class="t" id="t18" style="left:155px;top:133.82px;font-size:9px;color:#444444;transform:scaleX(0.9435);">Вставить</span>
<span class="t" id="t19" style="left:157px;top:159.40px;font-size:8px;color:#484848;transform:scaleX(0.9382);">Буфер обмена</span>
<span class="t" id="t20" style="left:238px;top:133.32px;font-size:9px;color:#444444;transform:scaleX(0.9356);">Создать</span>
<span class="t" id="t21" style="left:239px;top:144.32px;font-size:9px;color:#444444;transform:scaleX(0.9183);">слайд</span>
<span class="t" id="t22" style="left:254px;top:159.40px;font-size:8px;color:#484848;transform:scaleX(0.8730);">Слайды</span>
<span class="t" id="t23" style="left:419px;top:108.83px;font-size:9px;color:#b0b0b0;transform:scaleX(1.0983);">16</span>
<span class="t" id="t24" style="left:362px;top:159.40px;font-size:8px;color:#484848;transform:scaleX(0.9116);">Шрифт</span>
<span class="t" id="t25" style="left:503px;top:159.40px;font-size:8px;color:#484848;transform:scaleX(0.9353);">Абзац</span>
<span class="t" id="t26" style="left:588px;top:131.82px;font-size:9px;color:#444444;transform:scaleX(0.9486);">Рисование</span>
<span class="t" id="t27" style="left:645px;top:131.82px;font-size:9px;color:#444444;transform:scaleX(0.9480);">Редактирование</span>
<span class="t" id="t28" style="left:729px;top:133.32px;font-size:9px;color:#444444;transform:scaleX(0.9356);">Создать</span>
<span class="t" id="t29" style="left:737px;top:144.32px;font-size:9px;color:#444444;transform:scaleX(0.8889);">PDF</span>
<span class="t" id="t30" style="left:719px;top:159.40px;font-size:8px;color:#484848;transform:scaleX(0.9717);">Adobe Acrobat</span>
<span class="t" id="t31" style="left:780px;top:133.32px;font-size:9px;color:#444444;transform:scaleX(0.9718);">Надстройки</span>
<span class="t" id="t32" style="left:784px;top:159.40px;font-size:8px;color:#484848;transform:scaleX(0.9110);">Надстройки</span>
<span class="t" id="t33" style="left:313px;top:124.75px;font-size:10px;color:#b0b0b0;font-weight:700;transform:scaleX(0.9948);">Ж</span>
<span class="t" id="t34" style="left:331px;top:124.75px;font-size:10px;color:#b0b0b0;font-weight:700;transform:scaleX(1.1371);font-style:italic;">К</span>
<span class="t" id="t35" style="left:348px;top:124.75px;font-size:10px;color:#b0b0b0;transform:scaleX(1.0492);text-decoration:underline;">Ч</span>
<span class="t" id="t36" style="left:366px;top:124.75px;font-size:10px;color:#b0b0b0;font-weight:700;transform:scaleX(0.8993);">S</span>
<span class="t" id="t37" style="left:380px;top:126.97px;font-size:7px;color:#b0b0b0;transform:scaleX(1.0622);text-decoration:line-through;">abc</span>
<span class="t" id="t38" style="left:399px;top:124.69px;font-size:7.5px;color:#b0b0b0;transform:scaleX(0.9521);">AV</span>
<span class="t" id="t39" style="left:341px;top:140.68px;font-size:11px;color:#b0b0b0;transform:scaleX(1.0894);">A</span>
<span class="t" id="t40" style="left:369px;top:141.82px;font-size:9px;color:#b0b0b0;transform:scaleX(0.9078);">Aa</span>
<span class="t" id="t41" style="left:402px;top:142.04px;font-size:9.5px;color:#b0b0b0;transform:scaleX(0.9458);">A</span>
<span class="t" id="t42" style="left:419px;top:142.32px;font-size:9px;color:#b0b0b0;">A</span>
<span class="t" id="t43" style="left:156px;top:610.49px;font-size:7.5px;color:#555555;transform:scaleX(0.9606);">Слайд 3 из 8</span>
<span class="t" id="t44" style="left:236px;top:610.49px;font-size:7.5px;color:#555555;transform:scaleX(0.9658);">русский</span>
<span class="t" id="t45" style="left:492px;top:610.49px;font-size:7.5px;color:#555555;transform:scaleX(0.9760);">Заметки</span>
<span class="t" id="t46" style="left:547px;top:610.49px;font-size:7.5px;color:#555555;transform:scaleX(0.9928);">Примечания</span>
<span class="t" id="t47" style="left:823px;top:610.49px;font-size:7.5px;color:#555555;transform:scaleX(0.9324);">63%</span>
<span class="t" id="t48" style="left:156px;top:180.88px;font-size:11px;color:#666666;transform:scaleX(0.6531);">1</span>
<span class="t" id="t49" style="left:156px;top:231.88px;font-size:11px;color:#666666;transform:scaleX(0.8163);">2</span>
<span class="t" id="t50" style="left:156px;top:281.88px;font-size:11px;color:#c0392b;transform:scaleX(0.8163);">3</span>
<span class="t" id="t51" style="left:156px;top:332.88px;font-size:11px;color:#666666;transform:scaleX(0.8163);">4</span>
<span class="t" id="t52" style="left:156px;top:382.88px;font-size:11px;color:#666666;transform:scaleX(0.8163);">5</span>
<span class="t" id="t53" style="left:156px;top:433.88px;font-size:11px;color:#666666;transform:scaleX(0.8163);">6</span>
<span class="t" id="t54" style="left:156px;top:484.88px;font-size:11px;color:#666666;transform:scaleX(0.8163);">7</span>
<span class="t" id="t55" style="left:156px;top:534.88px;font-size:11px;color:#666666;transform:scaleX(0.8163);">8</span>
<span class="t" id="t56" style="left:1046.5px;top:392.81px;font-size:12.5px;color:#f2f2f2;transform:scaleX(0.9882);">Ольга Форостян</span>
<span class="t" id="t57" style="left:88px;top:691.88px;font-size:15px;color:#c9c4d8;transform:scaleX(1.0342);">Поиск</span>
<span class="t" id="t58" style="left:1120px;top:685.67px;font-size:11px;color:#fff;transform:scaleX(0.9646);">УКР</span>
<span class="t" id="t59" style="left:1117px;top:703.67px;font-size:11px;color:#fff;transform:scaleX(0.8998);">UKRE</span>
<span class="t" id="t60" style="left:1170px;top:685.39px;font-size:11.5px;color:#fff;transform:scaleX(1.0076);">16:16</span>
<span class="t" id="t61" style="left:1155px;top:703.39px;font-size:11.5px;color:#fff;transform:scaleX(1.0250);">03.03.2026</span>
<span class="t" id="t62" style="left:1245.5px;top:701.75px;font-size:10px;color:#fff;font-weight:700;transform:scaleX(1.0787);">7</span>
<span class="t" id="t63" style="left:932px;top:586.59px;font-size:19.5px;color:#828488;transform:scaleX(1.0127);">Активация Windows</span>
<span class="t" id="t64" style="left:932px;top:612.16px;font-size:14.5px;color:#787a7e;transform:scaleX(1.0083);">Чтобы активировать Windows, перейдите в</span>
<span class="t" id="t65" style="left:932px;top:632.66px;font-size:14.5px;color:#787a7e;">раздел "Параметры".</span>
</div>
</body>
</html>
